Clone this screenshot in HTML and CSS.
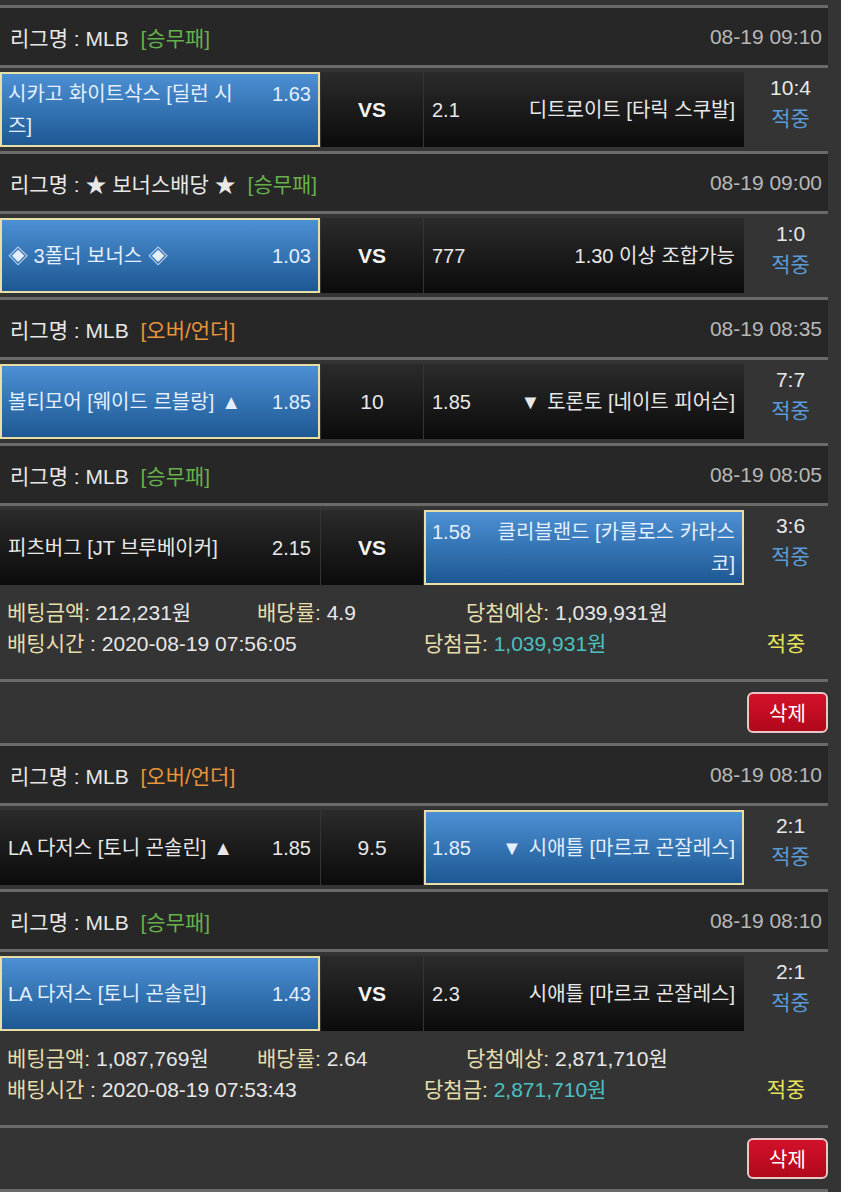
FILE: index.html
```html
<!DOCTYPE html>
<html lang="ko">
<head>
<meta charset="utf-8">
<title>배팅내역</title>
<link rel="stylesheet" href="styles.css">
</head>
<body>

<div class="board">

<div class="bet">
  <div class="league">
    <span>리그명 : MLB <span class="tag win">[승무패]</span></span>
    <span class="date">08-19 09:10</span>
  </div>
  <div class="match">
    <div class="pick home on"><span class="name">시카고 화이트삭스 [딜런 시즈]</span><span class="odds">1.63</span></div>
    <div class="mid vs">VS</div>
    <div class="pick away"><span class="odds">2.1</span><span class="name">디트로이트 [타릭 스쿠발]</span></div>
    <div class="result"><div>10:4</div><div class="hit">적중</div></div>
  </div>

  <div class="league">
    <span>리그명 : ★ 보너스배당 ★ <span class="tag win">[승무패]</span></span>
    <span class="date">08-19 09:00</span>
  </div>
  <div class="match">
    <div class="pick home on"><span class="name">◈ 3폴더 보너스 ◈</span><span class="odds">1.03</span></div>
    <div class="mid vs">VS</div>
    <div class="pick away"><span class="odds">777</span><span class="name">1.30 이상 조합가능</span></div>
    <div class="result"><div>1:0</div><div class="hit">적중</div></div>
  </div>

  <div class="league">
    <span>리그명 : MLB <span class="tag ou">[오버/언더]</span></span>
    <span class="date">08-19 08:35</span>
  </div>
  <div class="match">
    <div class="pick home on"><span class="name">볼티모어 [웨이드 르블랑]</span><span class="arrow">▲</span><span class="odds">1.85</span></div>
    <div class="mid">10</div>
    <div class="pick away"><span class="odds">1.85</span><span class="arrow">▼</span><span class="name">토론토 [네이트 피어슨]</span></div>
    <div class="result"><div>7:7</div><div class="hit">적중</div></div>
  </div>

  <div class="league">
    <span>리그명 : MLB <span class="tag win">[승무패]</span></span>
    <span class="date">08-19 08:05</span>
  </div>
  <div class="match">
    <div class="pick home"><span class="name">피츠버그 [JT 브루베이커]</span><span class="odds">2.15</span></div>
    <div class="mid vs">VS</div>
    <div class="pick away on"><span class="odds">1.58</span><span class="name">클리블랜드 [카를로스 카라스코]</span></div>
    <div class="result"><div>3:6</div><div class="hit">적중</div></div>
  </div>

  <div class="summary">
    <div><span class="lbl">베팅금액:</span> 212,231원</div>
    <div><span class="lbl">배당률:</span> 4.9</div>
    <div class="expect"><span class="lbl">당첨예상:</span> 1,039,931원</div>
    <div></div>
    <div class="wide"><span class="lbl">배팅시간</span> : 2020-08-19 07:56:05</div>
    <div><span class="lbl">당첨금:</span> <span class="won">1,039,931원</span></div>
    <div class="state">적중</div>
  </div>
  <div class="actions"><button type="button" class="del">삭제</button></div>
</div>

<div class="bet">
  <div class="league">
    <span>리그명 : MLB <span class="tag ou">[오버/언더]</span></span>
    <span class="date">08-19 08:10</span>
  </div>
  <div class="match">
    <div class="pick home"><span class="name">LA 다저스 [토니 곤솔린]</span><span class="arrow">▲</span><span class="odds">1.85</span></div>
    <div class="mid">9.5</div>
    <div class="pick away on"><span class="odds">1.85</span><span class="arrow">▼</span><span class="name">시애틀 [마르코 곤잘레스]</span></div>
    <div class="result"><div>2:1</div><div class="hit">적중</div></div>
  </div>

  <div class="league">
    <span>리그명 : MLB <span class="tag win">[승무패]</span></span>
    <span class="date">08-19 08:10</span>
  </div>
  <div class="match">
    <div class="pick home on"><span class="name">LA 다저스 [토니 곤솔린]</span><span class="odds">1.43</span></div>
    <div class="mid vs">VS</div>
    <div class="pick away"><span class="odds">2.3</span><span class="name">시애틀 [마르코 곤잘레스]</span></div>
    <div class="result"><div>2:1</div><div class="hit">적중</div></div>
  </div>

  <div class="summary">
    <div><span class="lbl">베팅금액:</span> 1,087,769원</div>
    <div><span class="lbl">배당률:</span> 2.64</div>
    <div class="expect"><span class="lbl">당첨예상:</span> 2,871,710원</div>
    <div></div>
    <div class="wide"><span class="lbl">배팅시간</span> : 2020-08-19 07:53:43</div>
    <div><span class="lbl">당첨금:</span> <span class="won">2,871,710원</span></div>
    <div class="state">적중</div>
  </div>
  <div class="actions"><button type="button" class="del">삭제</button></div>
</div>

</div>

</body>
</html>
```

FILE: styles.css
```css
body {
  margin: 0;
  background: #343434;
  font-family: "Liberation Sans", "Noto Sans CJK KR", sans-serif;
  font-size: 21px;
  color: #e8e8e8;
}

.board {
  width: 828px;
  padding-top: 5px;
  border-bottom: 3px solid #6a6a6a;
}

/* league title bar */
.league {
  display: flex;
  justify-content: space-between;
  align-items: center;
  height: 57px;
  padding: 0 6px 0 10px;
  background: #272727;
  border-top: 3px solid #6a6a6a;
}
.tag {
  margin-left: 6px;
}
.tag.win {
  color: #66b04a;
}
.tag.ou {
  color: #e8943a;
}
.date {
  color: #b8b8b8;
}

/* match row */
.match {
  display: grid;
  grid-template-columns: 320px 102px 320px 1fr;
  column-gap: 1px;
  padding: 4px 0;
  border-top: 3px solid #6a6a6a;
}
.pick,
.mid {
  box-sizing: border-box;
  height: 75px;
  display: flex;
  align-items: center;
  line-height: 32px;
  background: linear-gradient(#2b2b2b, #0b0b0b);
}
.pick {
  flex-wrap: wrap;
  align-content: center;
  align-items: baseline;
  padding: 0 9px 0 8px;
  font-size: 20px;
}
.pick.on {
  background: linear-gradient(#4c90d4, #1d5893);
  border: 2px solid #e9dfa6;
  padding: 0 7px 0 6px;
  color: #e4efff;
}
.pick .name {
  max-width: 240px;
}
.home .odds {
  margin-left: auto;
}
.home .arrow {
  margin-left: 7px;
}
.away .odds {
  margin-right: auto;
}
.away .arrow {
  margin-right: 7px;
}
.away .name {
  text-align: right;
}
.mid {
  justify-content: center;
}
.mid.vs {
  font-weight: bold;
  color: #f4f4f4;
}
.result {
  padding-left: 8px;
  text-align: center;
  line-height: 31px;
}
.hit {
  color: #5a9bd8;
}

/* bet summary */
.summary {
  display: grid;
  grid-template-columns: 250px 167px 320px 84px;
  padding: 8px 0 20px 7px;
  line-height: 31px;
}
.summary .wide {
  grid-column: span 2;
}
.summary .expect {
  padding-left: 42px;
}
.lbl {
  color: #e6deaa;
}
.won {
  color: #4cc0c0;
}
.state {
  text-align: center;
  color: #e4e25a;
}

.actions {
  display: flex;
  justify-content: flex-end;
  align-items: center;
  height: 61px;
  border-top: 3px solid #6a6a6a;
}
.del {
  width: 81px;
  height: 41px;
  background: linear-gradient(#d3112b, #b1081b);
  border: 2px solid #e9c6c6;
  border-radius: 6px;
  color: #fff;
  font-family: inherit;
  font-size: 20px;
}
```
